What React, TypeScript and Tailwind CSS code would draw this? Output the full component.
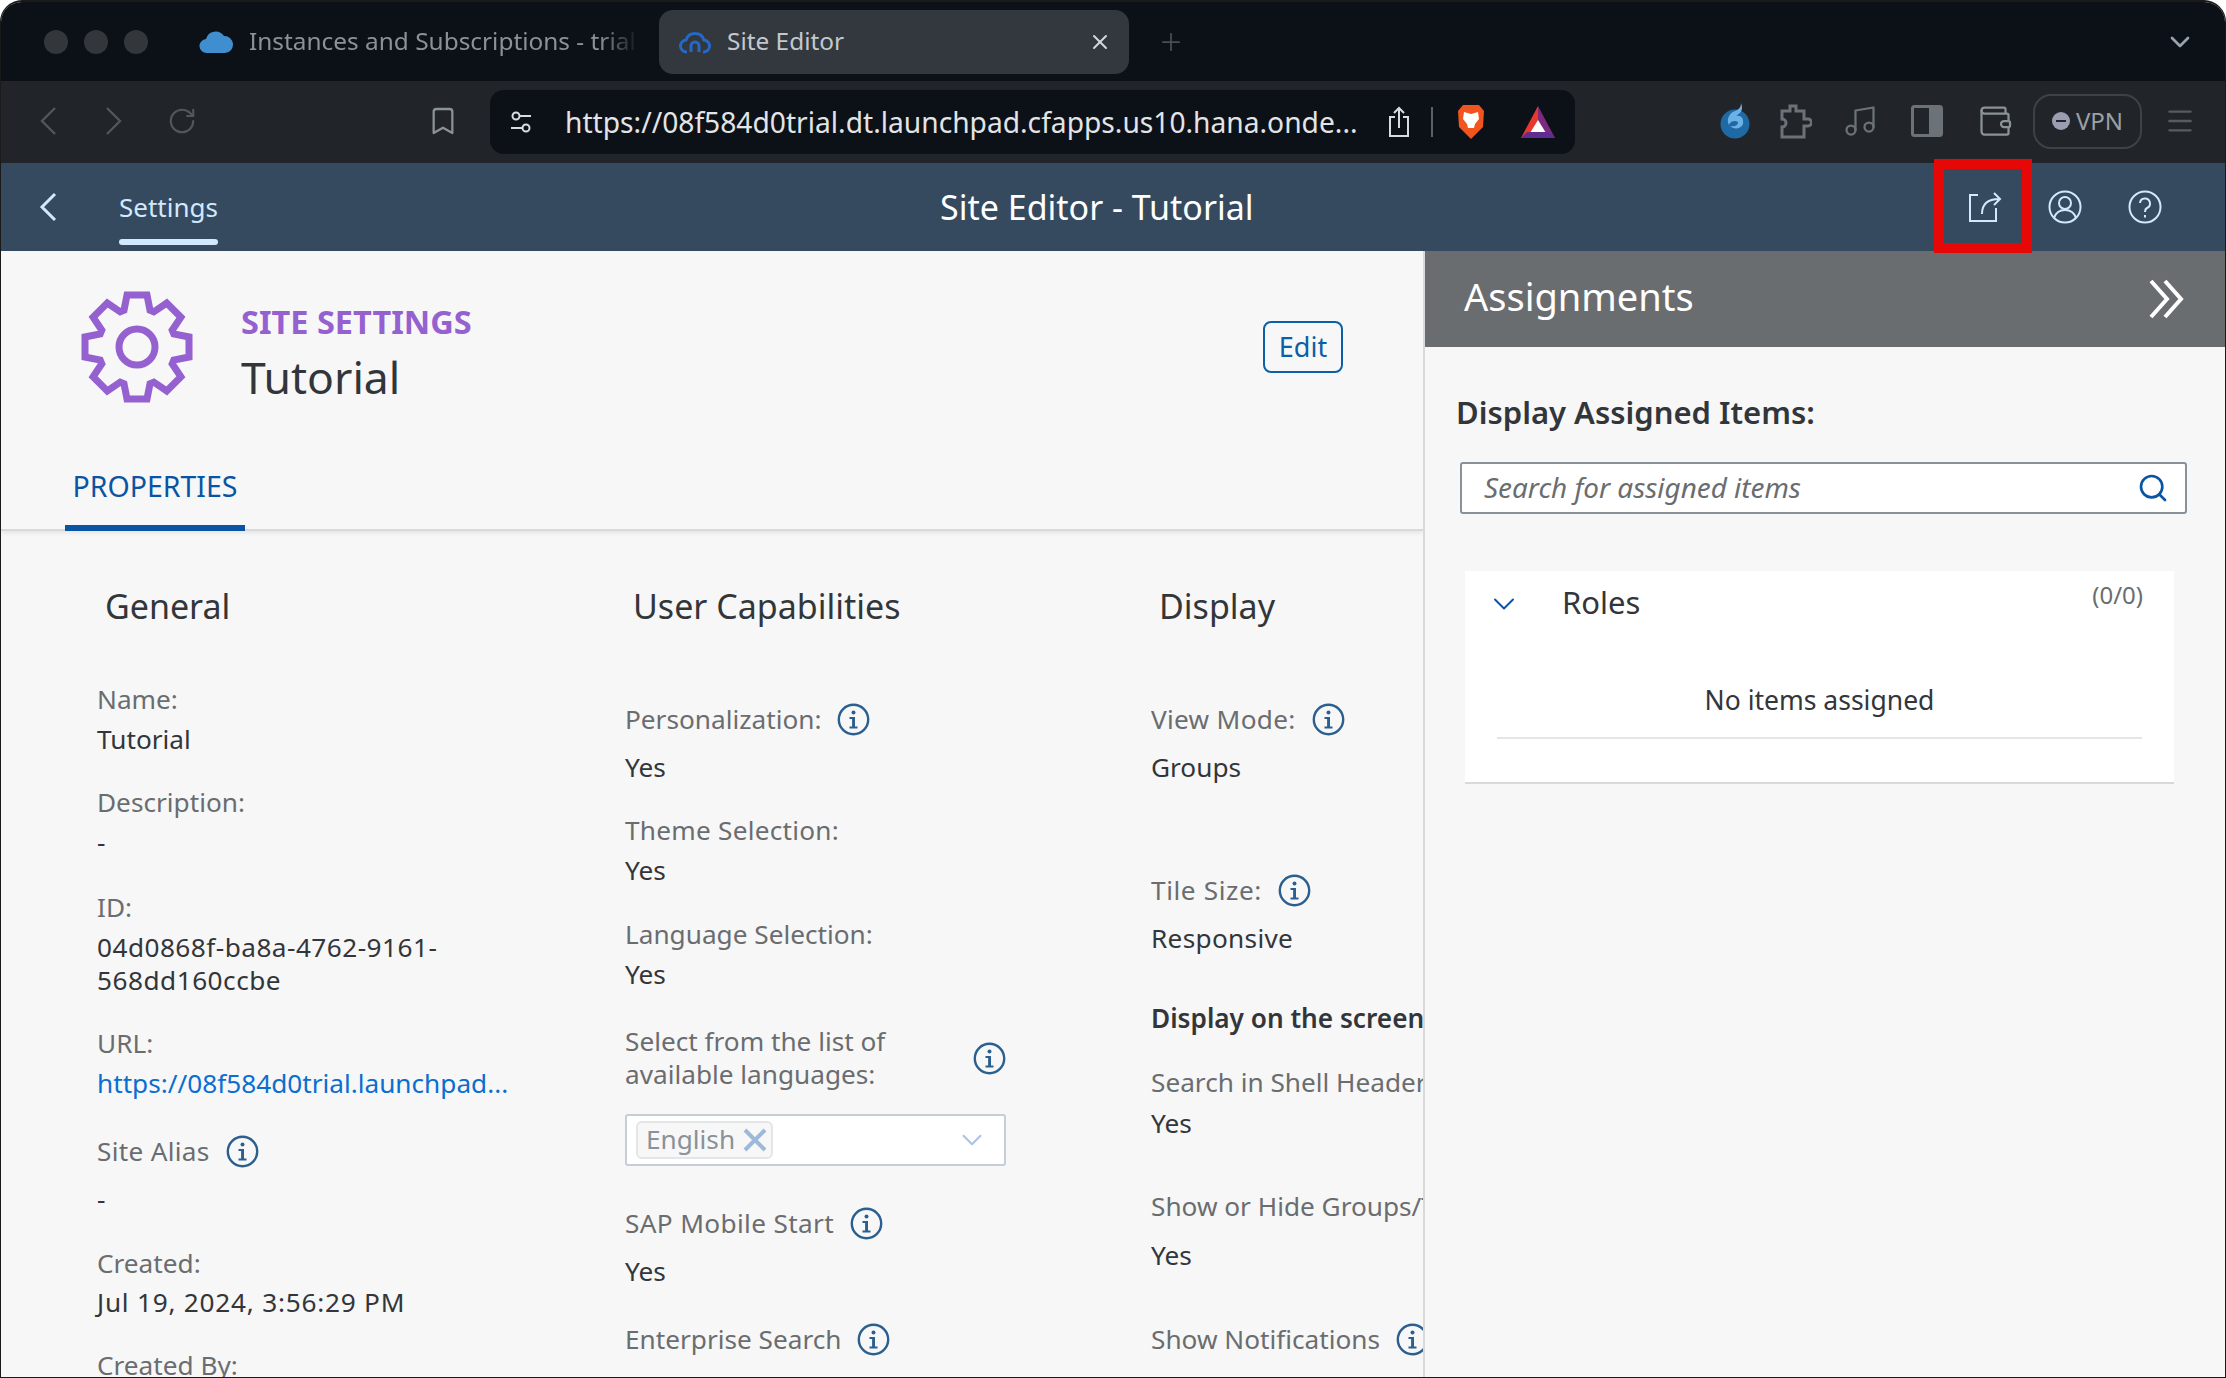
import { ReactNode } from "react";
import { X, Plus, ChevronDown, RotateCw, Bookmark, Search, Menu, Music, Wallet } from "lucide-react";

function InfoIcon() {
  return (
    <svg width="33" height="33" viewBox="0 0 33 33" className="shrink-0">
      <circle cx="16.5" cy="16.5" r="14.7" fill="none" stroke="#2b5f8f" strokeWidth="2.4" />
      <circle cx="16.5" cy="9.5" r="2" fill="#2b5f8f" />
      <path d="M12.5 14h5.5v9.5h2.5v2h-8v-2h2.6v-7.500h-2.600z" fill="#2b5f8f" />
    </svg>
  );
}

function Chevron({ dir, color, width = 2.4 }: { dir: "left" | "right"; color: string; width?: number }) {
  return (
    <svg width="18" height="30" viewBox="0 0 18 30" fill="none" stroke={color} strokeWidth={width}>
      <path d={dir === "left" ? "M16 2L3 15l13 13" : "M2 2l13 13L2 28"} />
    </svg>
  );
}

function gearPath() {
  const c = 56, pts: string[] = [];
  for (let i = 0; i < 8; i++) {
    const a = (i * Math.PI) / 4 - Math.PI / 2;
    const at = (r: number, d: number) => `${(c + r * Math.cos(a + d)).toFixed(1)} ${(c + r * Math.sin(a + d)).toFixed(1)}`;
    pts.push(at(39, -0.34), at(53, -0.19), at(53, 0.19), at(39, 0.34));
  }
  return "M" + pts.join("L") + "Z";
}

function Label({ children, info, className = "" }: { children: ReactNode; info?: boolean; className?: string }) {
  return (
    <div className={`flex items-center gap-[16px] text-[#6a6d70] leading-[33px] ${className}`}>
      <span className="whitespace-nowrap">{children}</span>
      {info && <InfoIcon />}
    </div>
  );
}

function Value({ children, className = "" }: { children: ReactNode; className?: string }) {
  return <div className={`text-[#32363a] leading-[33px] whitespace-nowrap ${className}`}>{children}</div>;
}

function BrowserChrome() {
  return (
    <>
      <div className="h-[79px] bg-[#0c1017] flex items-center pl-[43px] shrink-0">
        <div className="flex gap-[16px]">
          <span className="w-[24px] h-[24px] rounded-full bg-[#33373c]" />
          <span className="w-[24px] h-[24px] rounded-full bg-[#33373c]" />
          <span className="w-[24px] h-[24px] rounded-full bg-[#33373c]" />
        </div>
        <svg width="34" height="24" viewBox="0 0 34 24" className="ml-[51px]">
          <path d="M8 23a7 7 0 0 1-1-14 10 10 0 0 1 18-3 8.500 8.500 0 0 1 1 17z" fill="#3f8fd0" />
        </svg>
        <span className="ml-[16px] w-[390px] overflow-hidden whitespace-nowrap text-[24.4px] text-[#8d9196] [mask-image:linear-gradient(to_right,black_90%,transparent)]">Instances and Subscriptions - trial</span>
        <div className="ml-[20px] w-[470px] h-[64px] rounded-[14px] bg-[#32383e] flex items-center px-[20px]">
          <svg width="32" height="24" viewBox="0 0 32 24" fill="none" stroke="#2468c8" strokeWidth="3">
            <path d="M8 22a6 6 0 0 1-1-12 9.500 9.500 0 0 1 18 0 6 6 0 0 1-1 12M12 22v-6a4 4 0 0 1 8 0v6" />
          </svg>
          <span className="ml-[16px] text-[24.4px] text-[#c4c8cc]">Site Editor</span>
          <X size={24} color="#d5d8db" className="ml-auto mr-[-3px]" />
        </div>
        <Plus size={28} color="#494e54" strokeWidth={1.5} className="ml-[28px]" />
        <ChevronDown size={32} color="#9aa3ab" strokeWidth={2} className="ml-auto mr-[29px]" />
      </div>
      <div className="h-[82px] bg-[#212529] flex items-center pl-[38px] pb-[2px] shrink-0">
        <Chevron dir="left" color="#50575d" />
        <div className="ml-[48px]"><Chevron dir="right" color="#50575d" /></div>
        <RotateCw size={30} color="#50575d" strokeWidth={1.7} className="ml-[44px]" />
        <Bookmark size={32} color="#8b9298" strokeWidth={1.7} className="ml-[230px]" />
        <div className="ml-[31px] w-[1085px] h-[64px] rounded-[14px] bg-[#0c1017] flex items-center pl-[19px] mt-[2px]">
          <svg width="24" height="26" viewBox="0 0 24 26" fill="none" stroke="#d9dcdf" strokeWidth="2" className="shrink-0">
            <circle cx="7" cy="7" r="3.500" /><path d="M11 7h11M2 19h11" /><circle cx="17" cy="19" r="3.500" />
          </svg>
          <span className="ml-[32px] w-[795px] shrink-0 whitespace-nowrap text-[28.200px] text-[#e2e4e6]">https://08f584d0trial.dt.launchpad.cfapps.us10.hana.onde...</span>
          <svg width="24" height="32" viewBox="0 0 24 32" fill="none" stroke="#d9dcdf" strokeWidth="2" className="ml-[27px] shrink-0">
            <path d="M8 11H3v19h18V11h-5M12 22V2M7 7l5-5 5 5" />
          </svg>
          <span className="ml-[20px] w-[2px] h-[30px] bg-[#5a6066] shrink-0" />
          <svg width="30" height="36" viewBox="0 0 30 36" className="ml-[23px] shrink-0">
            <path d="M7 1h16l5 6-1 16-12 12L3 23 2 7z" fill="#f1541e" />
            <path d="M8 8l7 2 7-2 1 7-4 5-1 4h-6l-1-4-4-5z" fill="#fff" />
            <path d="M12 24h6l-3 4z" fill="#f1541e" />
          </svg>
          <svg width="36" height="34" viewBox="0 0 36 34" className="ml-[34px] shrink-0">
            <path d="M18 1L1 33h8l9-16z" fill="#e8372c" />
            <path d="M18 1l17 32h-8l-9-16z" fill="#7b2a7d" />
            <path d="M18 15l8 13H10z" fill="#fff" />
            <path d="M1 33l6-6h22l6 6z" fill="#5f2d91" />
          </svg>
        </div>
        <svg width="32" height="40" viewBox="0 0 32 40" className="ml-[144px]">
          <circle cx="16" cy="23" r="14.500" fill="#1f6aa5" />
          <path d="M22 2c3 8-1 10-5 13 5-1 8 2 7 8-2 5-9 6-13 2 4 1 8 0 8-4-3-2-8-1-9 3-3-5 0-12 6-14 3-1 6-3 6-8z" fill="#6cb2e6" />
        </svg>
        <svg width="34" height="36" viewBox="0 0 34 36" fill="none" stroke="#6b7278" strokeWidth="3" className="ml-[27px]">
          <path d="M4 8h8V3h6v5h8v8h4a3 3 0 0 1 0 7h-4v11H4V24a4 4 0 0 0 0-8z" />
        </svg>
        <Music size={36} color="#6b7278" strokeWidth={1.5} className="ml-[30px]" />
        <svg width="32" height="32" viewBox="0 0 32 32" className="ml-[33px]">
          <rect x="1.500" y="1.500" width="29" height="29" rx="2" fill="none" stroke="#6b7278" strokeWidth="3" />
          <rect x="18" y="1.500" width="12" height="29" fill="#6b7278" />
        </svg>
        <Wallet size={36} color="#8b9298" strokeWidth={1.5} className="ml-[34px]" />
        <div className="ml-[20px] w-[109px] h-[55px] rounded-[18px] border-2 border-[#3c4248] flex items-center justify-center gap-[6px]">
          <span className="w-[18px] h-[18px] rounded-full bg-[#9b9eb0] flex items-center justify-center"><span className="w-[10px] h-[2px] bg-[#212529]" /></span>
          <span className="text-[24px] text-[#9aa0a6]">VPN</span>
        </div>
        <Menu size={32} color="#565c62" strokeWidth={1.7} className="ml-[22px]" />
      </div>
    </>
  );
}

function ShellBar() {
  return (
    <div className="relative h-[88px] bg-[#354a5f] flex items-center shrink-0">
      <div className="ml-[38px]"><Chevron dir="left" color="#d1e8ff" width={3} /></div>
      <div className="relative ml-[62px] h-full flex items-center">
        <span className="text-[26px] text-[#d1e8ff]">Settings</span>
        <span className="absolute left-0 right-0 bottom-[6px] h-[6px] rounded-[3px] bg-[#d1e8ff]" />
      </div>
      <span className="absolute left-[939px] text-[34px] text-white whitespace-nowrap">Site Editor - Tutorial</span>
      <div className="ml-auto flex items-center gap-[46px] pr-[63px]">
        <svg width="34" height="32" viewBox="0 0 34 32" fill="none" stroke="#d1e8ff" strokeWidth="2">
          <path d="M10 4H2v26h26V17" /><path d="M14 23c0-10 6-15 17-15M26 2l6 6-6 6" />
        </svg>
        <svg width="34" height="34" viewBox="0 0 34 34" fill="none" stroke="#d1e8ff" strokeWidth="2">
          <circle cx="17" cy="17" r="15.500" /><circle cx="17" cy="13" r="6" /><path d="M6 28c2-6 6-8 11-8s9 2 11 8" />
        </svg>
        <svg width="34" height="34" viewBox="0 0 34 34" fill="none" stroke="#d1e8ff" strokeWidth="2">
          <circle cx="17" cy="17" r="15.500" /><path d="M12 13a5 5 0 1 1 7 5c-2 1-2 2-2 4" /><path d="M17 25v2.500" />
        </svg>
      </div>
      <div className="absolute left-[1933px] top-[-4px] w-[98px] h-[94px] border-10 border-[#e60707]" />
    </div>
  );
}

function SiteHeader() {
  return (
    <div className="h-[280px] shrink-0 border-b-2 border-[#d9d9d9] shadow-[0_2px_4px_rgba(0,0,0,0.08)] relative">
      <div className="flex items-start pl-[80px] pt-[40px] pr-[80px]">
        <svg width="112" height="112" viewBox="0 0 112 112" fill="none" stroke="#9560cf" strokeWidth="7" className="shrink-0">
          <path d={gearPath()} />
          <circle cx="56" cy="56" r="18" />
        </svg>
        <div className="ml-[48px] mt-[11px]">
          <div className="text-[#9560cf] text-[32.500px] font-bold leading-[40px]">SITE SETTINGS</div>
          <div className="text-[#32363a] text-[44.500px] leading-[64px] mt-[3px]">Tutorial</div>
        </div>
        <div className="ml-auto mt-[30px] w-[80px] h-[52px] rounded-[8px] border-2 border-[#0a5fa8] flex items-center justify-center text-[#0a5fa8] text-[27px]">Edit</div>
      </div>
      <div className="absolute left-[64px] bottom-[-2px] w-[180px] h-[66px] flex items-start justify-center border-b-[6px] border-[#0a55a3] text-[#0a55a3] text-[28.500px]">PROPERTIES</div>
    </div>
  );
}

function GeneralColumn() {
  return (
    <div className="w-[624px] shrink-0 pl-[96px]">
      <div className="text-[34px] text-[#32363a] leading-[46px] ml-[8px]">General</div>
      <Label className="mt-[54px]">Name:</Label>
      <Value className="mt-[7px]">Tutorial</Value>
      <Label className="mt-[30px]">Description:</Label>
      <Value className="mt-[7px]">-</Value>
      <Label className="mt-[32px]">ID:</Label>
      <Value className="mt-[7px] tracking-[0.470px]">04d0868f-ba8a-4762-9161-</Value>
      <Value className="tracking-[0.500px]">568dd160ccbe</Value>
      <Label className="mt-[30px]">URL:</Label>
      <Value className="mt-[7px] text-[#0a6ed1]!">https://08f584d0trial.launchpad...</Value>
      <Label info className="mt-[35px] tracking-[0.300px]">Site Alias</Label>
      <Value className="mt-[15px]">-</Value>
      <Label className="mt-[31px]">Created:</Label>
      <Value className="mt-[6px] tracking-[0.770px]">Jul 19, 2024, 3:56:29 PM</Value>
      <Label className="mt-[30px]">Created By:</Label>
    </div>
  );
}

function CapabilitiesColumn() {
  return (
    <div className="w-[526px] shrink-0">
      <div className="text-[34px] text-[#32363a] leading-[46px] ml-[8px]">User Capabilities</div>
      <Label info className="mt-[74px]">Personalization:</Label>
      <Value className="mt-[15px]">Yes</Value>
      <Label className="mt-[30px] tracking-[0.250px]">Theme Selection:</Label>
      <Value className="mt-[7px]">Yes</Value>
      <Label className="mt-[31px]">Language Selection:</Label>
      <Value className="mt-[7px]">Yes</Value>
      <div className="mt-[34px] w-[381px] flex items-center justify-between">
        <Label>Select from the list of<br />available languages:</Label>
        <InfoIcon />
      </div>
      <div className="mt-[23px] w-[381px] h-[52px] border-2 border-[#c5cdd6] rounded-[3px] bg-white flex items-center px-[9px]">
        <div className="h-[38px] w-[137px] border-2 border-[#e4e5e6] bg-[#f7f7f7] rounded-[6px] flex items-center pl-[8px] text-[#89919a]">
          English
          <svg width="24" height="24" viewBox="0 0 24 24" fill="none" stroke="#9db8d9" strokeWidth="4" className="ml-[8px] shrink-0">
            <path d="M2 2l20 20M22 2L2 22" />
          </svg>
        </div>
        <ChevronDown size={34} color="#a9c3e4" strokeWidth={1.4} className="ml-auto mr-[6px]" />
      </div>
      <Label info className="mt-[41px] tracking-[0.350px]">SAP Mobile Start</Label>
      <Value className="mt-[15px]">Yes</Value>
      <Label info className="mt-[35px]">Enterprise Search</Label>
      <Value className="mt-[15px]">No</Value>
    </div>
  );
}

function DisplayColumn() {
  return (
    <div className="flex-1 min-w-0 overflow-hidden">
      <div className="text-[34px] text-[#32363a] leading-[46px] ml-[8px]">Display</div>
      <Label info className="mt-[74px] tracking-[0.300px]">View Mode:</Label>
      <Value className="mt-[15px]">Groups</Value>
      <Label info className="mt-[90px] tracking-[0.600px]">Tile Size:</Label>
      <Value className="mt-[15px] tracking-[0.300px]">Responsive</Value>
      <div className="mt-[47px] leading-[33px] font-semibold text-[#32363a] whitespace-nowrap">Display on the screen</div>
      <Label className="mt-[31px]">Search in Shell Header</Label>
      <Value className="mt-[8px]">Yes</Value>
      <Label className="mt-[50px]">Show or Hide Groups/Tiles</Label>
      <Value className="mt-[16px]">Yes</Value>
      <Label info className="mt-[51px]">Show Notifications</Label>
      <Value className="mt-[15px]">No</Value>
    </div>
  );
}

function AssignmentsPanel() {
  return (
    <div className="flex-1 min-w-0 bg-[#f7f7f7]">
      <div className="h-[96px] bg-[#6a6d70] flex items-center pl-[39px] pr-[41px] pb-[6px] text-white text-[38px]">
        Assignments
        <svg width="36" height="40" viewBox="0 0 36 40" fill="none" stroke="#fff" strokeWidth="4" className="ml-auto mt-[6px]">
          <path d="M3 2l16 18L3 38M17 2l16 18-16 18" />
        </svg>
      </div>
      <div className="pl-[31px] pt-[45px] pr-[38px]">
        <div className="font-semibold text-[#32363a] text-[31px] leading-[40px]">Display Assigned Items:</div>
        <div className="ml-[4px] mt-[30px] h-[52px] border-2 border-[#89919a] rounded-[3px] bg-white flex items-center px-[22px]">
          <span className="italic text-[#6a6d70] text-[27.900px]">Search for assigned items</span>
          <Search size={32} color="#0a55a3" strokeWidth={2} className="ml-auto mr-[-6px]" />
        </div>
        <div className="ml-[9px] mt-[57px] w-[709px] h-[213px] bg-white border-b-2 border-[#d9d9d9] px-[32px]">
          <div className="flex items-center h-[46px] pt-[16px]">
            <ChevronDown size={36} color="#0a55a3" strokeWidth={1.3} className="ml-[-11px] mt-[3px]" />
            <span className="ml-[40px] text-[31px] text-[#32363a]">Roles</span>
            <span className="ml-auto text-[24px] text-[#6a6d70] mt-[-14px] mr-[-1px]">(0/0)</span>
          </div>
          <div className="mt-[65px] h-[57px] border-b-2 border-[#e5e5e5] text-center text-[#32363a] text-[26.500px] leading-[36px]">No items assigned</div>
        </div>
      </div>
    </div>
  );
}

export default function App() {
  return (
    <div className="w-[2226px] h-[1378px] bg-white overflow-hidden text-[26.200px]" style={{ fontFamily: '"Noto Sans", sans-serif' }}>
      <div className="w-full h-full rounded-t-[22px] overflow-hidden border-x border-b border-t-2 border-[#1a1a1a] bg-[#f7f7f7] flex flex-col">
        <BrowserChrome />
        <ShellBar />
        <div className="flex flex-1 min-h-0">
          <div className="w-[1424px] shrink-0 flex flex-col border-r-2 border-[#d9d9d9] overflow-hidden">
            <SiteHeader />
            <div className="flex pt-[52px]">
              <GeneralColumn />
              <CapabilitiesColumn />
              <DisplayColumn />
            </div>
          </div>
          <AssignmentsPanel />
        </div>
      </div>
    </div>
  );
}
